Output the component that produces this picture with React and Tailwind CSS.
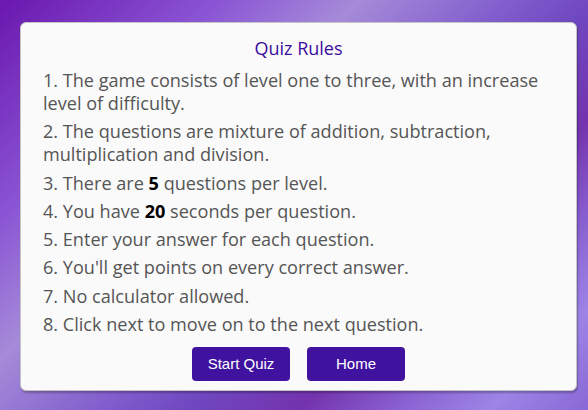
const rules = [
  { id: 1, text: 'The game consists of level one to three, with an increase level of difficulty.' },
  { id: 2, text: 'The questions are mixture of addition, subtraction, multiplication and division.' },
  { id: 3, before: 'There are ', strong: '5', after: ' questions per level.' },
  { id: 4, before: 'You have ', strong: '20', after: ' seconds per question.' },
  { id: 5, text: 'Enter your answer for each question.' },
  { id: 6, text: "You'll get points on every correct answer." },
  { id: 7, text: 'No calculator allowed.' },
  { id: 8, text: 'Click next to move on to the next question.' },
];

const QuizRules = () => {
  return (
    <div className="h-[410px] w-[588px] overflow-hidden bg-[linear-gradient(135deg,#6a17ae_0%,#8a55d4_22%,#a58bd8_36%,#7f5bcc_52%,#6f47c0_60%,#7433ae_71%,#8c66d4_82%,#9d84e6_90%,#8a68d6_100%)] pt-[22px] pl-[20px]">
      <div className="w-[557px] h-[369px] rounded-[6px] border border-[#c4c4c4] bg-[#fafafa] px-[22px] pt-[12px] shadow-[1px_2px_2px_rgba(0,0,0,0.25)] font-['Open_Sans',sans-serif]">
        <h2 className="text-center text-[18px] leading-[26px] font-normal text-[#3a0ca0]">Quiz Rules</h2>
        <div className="mt-[8px] text-[18.1px] leading-[23px] text-[#555555]">
          {rules.map((r) =>
            r.text ? (
              <p key={r.id} className="mb-[5.3px]">{`${r.id}. ${r.text}`}</p>
            ) : (
              <p key={r.id} className="mb-[5.3px]">
                {`${r.id}. ${r.before}`}
                <strong className="font-bold text-black">{r.strong}</strong>
                {r.after}
              </p>
            )
          )}
        </div>
        <div className="mt-[11px] flex justify-center gap-[17px] font-['Liberation_Sans',Arial,sans-serif]">
          <button className="h-[34px] w-[98px] rounded-[4px] bg-[#3f12a0] text-[15px] text-white">Start Quiz</button>
          <button className="h-[34px] w-[98px] rounded-[4px] bg-[#3f12a0] text-[15px] text-white">Home</button>
        </div>
      </div>
    </div>
  );
};

export default QuizRules;
